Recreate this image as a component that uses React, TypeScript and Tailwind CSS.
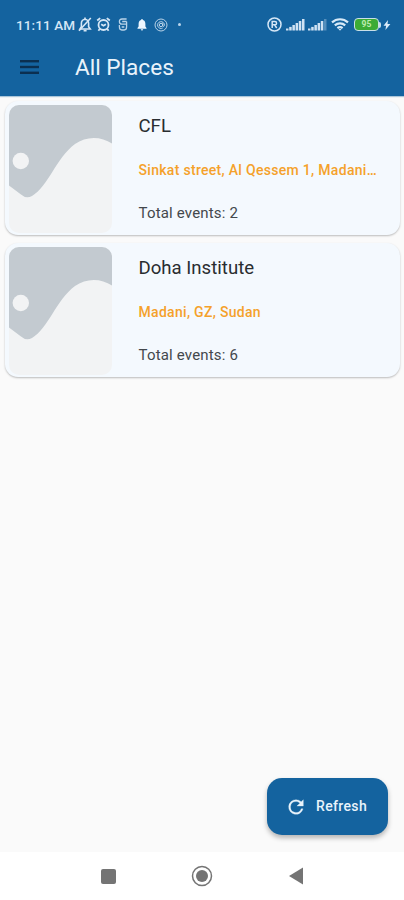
import React from "react";

interface Place {
  id: number;
  name: string;
  address: string;
  totalEvents: number;
}

const places: Place[] = [
  { id: 1, name: "CFL", address: "Sinkat street, Al Qessem 1, Madani…", totalEvents: 2 },
  { id: 2, name: "Doha Institute", address: "Madani, GZ, Sudan", totalEvents: 6 },
];

const SignalIcon = ({ weak = false }: { weak?: boolean }) => (
  <svg width="19" height="12" viewBox="0 0 19 12" fill="#cfe2f3">
    <rect x="0" y="9.5" width="2.5" height="2" />
    <rect x="3.2" y="7.9" width="2.5" height="3.6" />
    <rect x="6.4" y="6" width="2.5" height="5.5" />
    <rect x="9.6" y="4" width="2.5" height="7.5" />
    <rect x="12.8" y="2" width="2.5" height="9.5" />
    <rect x="16" y="0" width="2.5" height="11.5" opacity={weak ? 0.35 : 1} />
  </svg>
);

const StatusBar = () => (
  <div className="flex h-[49px] items-center pl-4 pr-[13px] text-[#d6e7f6]">
    <span className="w-[62px] whitespace-nowrap text-[13.5px] font-medium leading-5 tracking-[0.1px]">11:11 AM</span>
    {/* Muted bell */}
    <svg width="14" height="15" viewBox="0 0 14 15" fill="none" stroke="currentColor" strokeWidth="1.6">
      <path d="M2 12h10.2l-1.6-2.2V6.2A3.7 3.7 0 0 0 7 2.3a3.7 3.7 0 0 0-3.6 3.9v3.6z" />
      <path d="M7 .6v1.7M5.6 13.6h3M1 13.7L12.8 1" />
    </svg>
    {/* Alarm */}
    <svg className="ml-1" width="15" height="15" viewBox="0 0 14 15" fill="none" stroke="currentColor" strokeWidth="1.8">
      <circle cx="7" cy="8" r="5" />
      <path d="M4.7 7.2L7 8.7l2.4-1.5M.7 3.5l3-2.4M13.3 3.5l-3-2.4M3.2 12l-1.3 1.7M10.8 12l1.3 1.7" />
    </svg>
    <svg className="ml-[7px]" width="10" height="13" viewBox="0 0 10 13" fill="none" stroke="currentColor" strokeWidth="1.3" opacity=".85">
      <path d="M8.6 1H4C2.2 1 1.4 2 1.4 3.5S2.2 6.2 4 6.2h4.6M8.6 3.5H4.2M8.6 3.5v5.3c0 2.1-.9 3.2-2.4 3.2H3.8c-1.6 0-2.4-1.1-2.4-3.2V7M3.7 9h2.6" />
    </svg>
    {/* Notification bell */}
    <svg className="ml-[9px]" width="10" height="12" viewBox="0 0 10 12" fill="#edf6ff">
      <path d="M5 0c.6 0 .9.4.9.9C7.8 1.3 8.4 2.9 8.4 5v2.5L9.5 9v.7h-9V9l1.1-1.5V5c0-2.1.6-3.7 2.5-4.1C4.1.4 4.4 0 5 0zM3.8 10.2h2.4a1.2 1.2 0 0 1-2.4 0z" />
    </svg>
    <svg className="ml-[7px]" width="14" height="14" viewBox="0 0 14 14" fill="none" stroke="currentColor" strokeWidth="1" opacity=".85">
      <circle cx="7" cy="7" r="6" />
      <circle cx="7" cy="7" r="1.7" />
      <path d="M8.8 5.2v2.4c0 1.4 1.6 1.1 1.6-.6A3.4 3.4 0 1 0 8.7 10" />
    </svg>
    <span className="ml-[10px] h-[3px] w-[3px] rounded-full bg-[#b9d5ec]" />

    <div className="ml-auto flex items-center">
      {/* Registered mark */}
      <svg width="15" height="15" viewBox="0 0 15 15" fill="none" stroke="currentColor" strokeWidth="1.5">
        <circle cx="7.5" cy="7.5" r="6.5" />
        <path d="M5.2 11V4.6h2.7c2.2 0 2.2 3.2 0 3.2H5.4M7.6 7.8L9.7 11" />
      </svg>
      <span className="ml-1"><SignalIcon /></span>
      <span className="ml-[3px]"><SignalIcon weak /></span>
      <svg className="ml-1" width="18" height="13" viewBox="0 0 18 13" fill="none" stroke="#d8eaf8" strokeWidth="2.2">
        <path d="M1 4.4c4.6-4.2 11.4-4.2 16 0M3.8 7.4c3-2.7 7.4-2.7 10.4 0M6.4 10.2c1.6-1.3 3.6-1.3 5.2 0" />
        <path d="M7.5 11h3L9 12.8z" fill="#d8eaf8" stroke="none" />
      </svg>
      {/* Battery */}
      <div className="ml-[5px] flex items-center">
        <div className="flex h-[13px] w-[25px] items-center justify-center rounded-[4px] border-[1.5px] border-[#c9dfe9] bg-[#3cab35] text-[8.5px] font-bold leading-none text-[#bdebae]">
          95
        </div>
        <span className="h-[6px] w-[2px] rounded-r-full bg-[#c9dfe9]" />
      </div>
      <svg className="ml-[2px]" width="8" height="12" viewBox="0 0 8 12" fill="#dcecf9">
        <path d="M5 1L.5 6.8h2.6L2.4 11l5-6H4.5z" />
      </svg>
    </div>
  </div>
);

const Placeholder = () => (
  <svg className="h-[128px] w-[103px] shrink-0 rounded-[10px]" viewBox="0 0 103 128" preserveAspectRatio="none">
    <rect width="103" height="128" fill="#f2f3f4" />
    <path
      d="M0 0H103V38.5C92 31 77 31 66 39C47 53 39 82 23 91Q17 94 12 89.5L0 80.5Z"
      fill="#c3cad0"
    />
    <circle cx="11.8" cy="56" r="8.2" fill="#f2f3f4" />
  </svg>
);

const PlaceCard = ({ place }: { place: Place }) => (
  <div className="flex h-[134px] rounded-[13px] bg-[#f4f9fe] px-1 pt-1 shadow-[0_1px_2px_rgba(0,0,0,0.25)]">
    <Placeholder />
    <div className="ml-[26.5px] min-w-0 flex-1">
      <h2 className="mt-[6px] text-[18.6px] font-normal leading-[30px] text-[#292d30]">{place.name}</h2>
      <p className="mt-[19px] whitespace-nowrap text-[14px] font-medium leading-5 tracking-[0.3px] text-[#f5a12b]">
        {place.address}
      </p>
      <p className="mt-[22px] text-[15px] leading-[22px] tracking-[0.18px] text-[#43484c]">
        Total events: {place.totalEvents}
      </p>
    </div>
  </div>
);

const App: React.FC = () => {
  return (
    <div className="flex h-[900px] w-[404px] flex-col overflow-hidden bg-[#fafafa] font-['Roboto',sans-serif]">
      <header className="h-24 shrink-0 bg-[#14639f] shadow-[0_1px_1px_rgba(20,99,159,0.35)]">
        <StatusBar />
        <div className="flex h-[38px] items-center pl-5">
          <svg className="mb-[2px]" width="19" height="14" viewBox="0 0 19 14" fill="#0b2f50">
            <rect y="0" width="19" height="2.4" />
            <rect y="5.8" width="19" height="2.4" />
            <rect y="11.6" width="19" height="2.4" />
          </svg>
          <h1 className="ml-9 text-[22.6px] font-normal leading-9 text-[#e9f3fb]">All Places</h1>
        </div>
      </header>

      {/* Places list */}
      <main className="flex flex-1 flex-col gap-2 pl-[5px] pr-1 pt-[5px]">
        {places.map((place) => (
          <PlaceCard key={place.id} place={place} />
        ))}
        <button className="mb-[17px] mr-3 mt-auto flex h-[57px] w-[121px] items-center self-end rounded-[15px] bg-[#14639f] pl-[18px] text-[#e9f3fb] shadow-[0_3px_5px_rgba(0,0,0,0.28)]">
          <svg width="22" height="22" viewBox="0 0 24 24" fill="currentColor" stroke="currentColor" strokeWidth="0.3">
            <path d="M17.65 6.35A7.958 7.958 0 0 0 12 4a8 8 0 1 0 7.73 10h-2.08A6 6 0 1 1 12 6c1.66 0 3.14.69 4.22 1.78L13 11h7V4l-2.35 2.35z" />
          </svg>
          <span className="ml-[9px] text-[14px] font-medium tracking-[0.35px]">Refresh</span>
        </button>
      </main>

      {/* System navigation */}
      <nav className="flex h-12 shrink-0 items-center bg-white pl-[101px]">
        <span className="h-[15px] w-[15px] rounded-[2px] bg-[#747474]" />
        <svg className="ml-[75px]" width="22" height="22" viewBox="0 0 22 22">
          <circle cx="11" cy="11" r="9.5" fill="none" stroke="#747474" strokeWidth="1.5" />
          <circle cx="11" cy="11" r="6" fill="#747474" />
        </svg>
        <svg className="ml-[76px]" width="14" height="18" viewBox="0 0 14 18" fill="#747474">
          <path d="M0 9L14 .5v17z" />
        </svg>
      </nav>
    </div>
  );
};

export default App;
